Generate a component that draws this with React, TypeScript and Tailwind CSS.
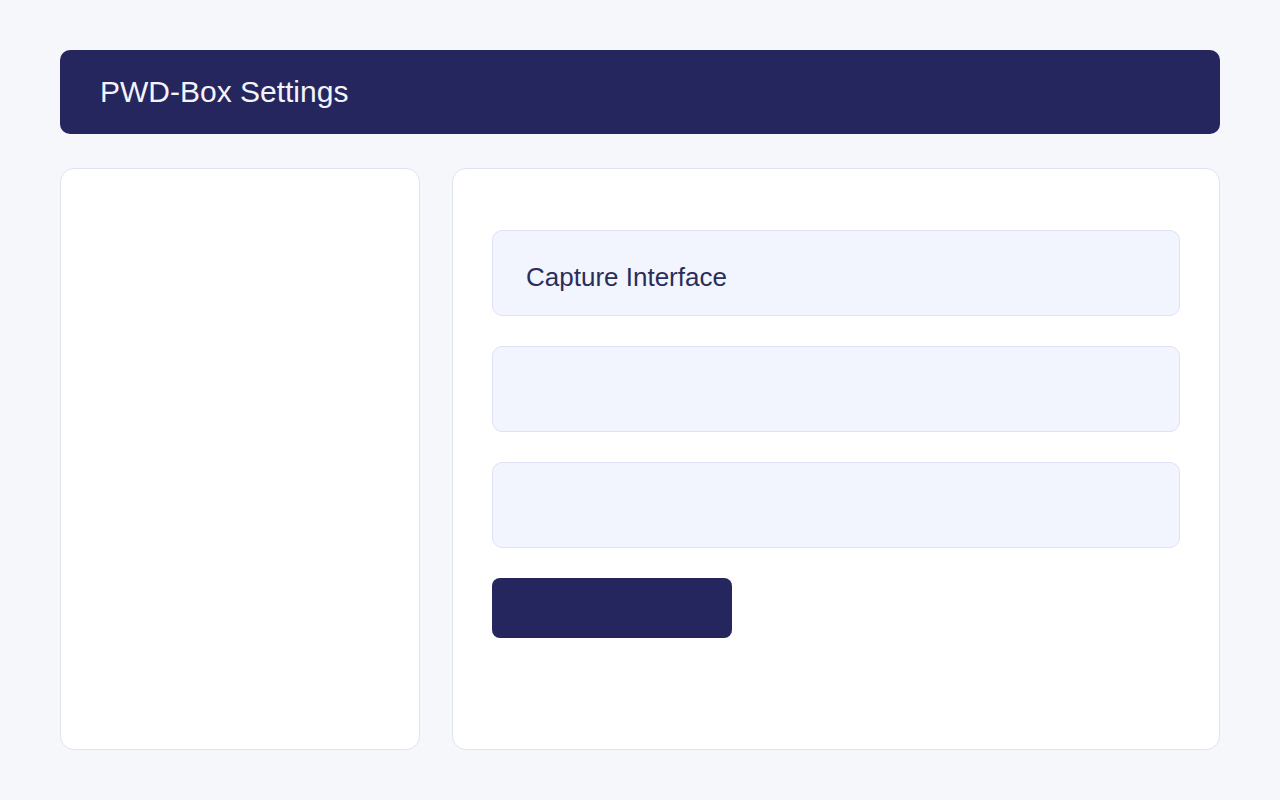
export default function App() {
  const fields = ["Capture Interface", "", ""];

  return (
    <div className="min-h-screen w-full bg-[#f6f7fb] px-[60px] pt-[50px] font-['Liberation_Sans',Arial,sans-serif]">
      {/* Header */}
      <div className="flex h-[84px] items-center rounded-[10px] bg-[#25265e] px-10">
        <h1 className="text-[30px] leading-none text-[#f3f4fb]">PWD-Box Settings</h1>
      </div>

      <div className="mt-[34px] flex gap-8">
        {/* Sidebar */}
        <div className="h-[582px] w-[360px] shrink-0 rounded-[14px] border border-[#e0e2ef] bg-white" />

        {/* Main panel */}
        <div className="h-[582px] flex-1 rounded-[14px] border border-[#e0e2ef] bg-white px-[39px] pt-[61px]">
          <div className="flex flex-col gap-[30px]">
            {fields.map((label, i) => (
              <div
                key={i}
                className="flex h-[86px] items-center rounded-[10px] border border-[#dfe2f4] bg-[#f2f5fe] px-[33px] pt-2"
              >
                {label && (
                  <span className="text-[26px] leading-none text-[#2a2d59]">{label}</span>
                )}
              </div>
            ))}
            <button className="h-[60px] w-[240px] rounded-lg bg-[#25265e]" />
          </div>
        </div>
      </div>
    </div>
  );
}
